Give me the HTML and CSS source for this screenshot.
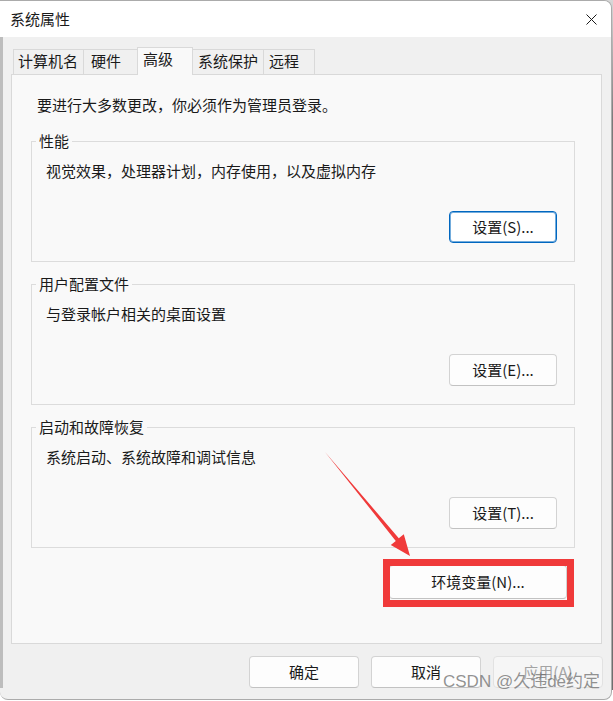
FILE: index.html
```html
<!DOCTYPE html>
<html lang="zh-CN">
<head>
<meta charset="utf-8">
<title>系统属性</title>
<link rel="stylesheet" href="styles.css">
</head>
<body>
<div class="window">
  <div class="titlebar">
    <span class="title">系统属性</span>
    <svg class="close" viewBox="0 0 11 11" width="11" height="11"><path d="M0.5 0.5 L10.5 10.5 M10.5 0.5 L0.5 10.5" stroke="#1a1a1a" stroke-width="1" fill="none"/></svg>
  </div>
  <div class="main">
    <div class="tabs">
      <div class="tab t1">计算机名</div>
      <div class="tab t2">硬件</div>
      <div class="tab t3 active">高级</div>
      <div class="tab t4">系统保护</div>
      <div class="tab t5">远程</div>
    </div>
    <div class="panel">
      <p class="note">要进行大多数更改，你必须作为管理员登录。</p>
      <fieldset class="group">
        <legend>性能</legend>
        <p class="desc">视觉效果，处理器计划，内存使用，以及虚拟内存</p>
        <div class="actions"><button class="btn focus">设置(S)...</button></div>
      </fieldset>
      <fieldset class="group">
        <legend>用户配置文件</legend>
        <p class="desc">与登录帐户相关的桌面设置</p>
        <div class="actions"><button class="btn">设置(E)...</button></div>
      </fieldset>
      <fieldset class="group">
        <legend>启动和故障恢复</legend>
        <p class="desc">系统启动、系统故障和调试信息</p>
        <div class="actions"><button class="btn">设置(T)...</button></div>
      </fieldset>
      <div class="env-row"><button class="btn env">环境变量(N)...</button></div>
    </div>
  </div>
  <div class="footer">
    <button class="btn wide">确定</button>
    <button class="btn wide">取消</button>
    <button class="btn wide disabled">应用(A)</button>
  </div>
</div>
<svg class="arrow" viewBox="0 0 613 701" width="613" height="701">
  <polygon points="325,452 398.8,538.3 403.8,534.2 410,556 390.8,545 395.8,540.9" fill="#f03a3a"/>
</svg>
<div class="redbox"></div>
<div class="watermark">CSDN @久违de约定</div>
</body>
</html>
```
FILE: styles.css
```css
html, body {
  margin: 0;
  padding: 0;
}
body {
  width: 613px;
  height: 701px;
  position: relative;
  overflow: hidden;
  background: linear-gradient(to bottom, #d8d8d8 0, #7a7a7a 120px, #6e6e6e 690px, #ffffff 690px);
  font-family: "Noto Sans CJK SC", "Microsoft YaHei", sans-serif;
  font-size: 15px;
  color: #1a1a1a;
}
.window {
  width: 612px;
  height: 700px;
  box-sizing: border-box;
  border: 1px solid #ababab;
  border-left: none;
  border-radius: 0 8px 8px 8px;
  background: #f0f0f0;
  overflow: hidden;
  display: flex;
  flex-direction: column;
}
.titlebar {
  flex: none;
  height: 36px;
  background: #ffffff;
  display: flex;
  align-items: center;
  justify-content: space-between;
  padding: 0 14px 0 10px;
  line-height: 20px;
}
.close {
  display: block;
}
.main {
  flex: none;
  padding: 0 9px 0 11px;
  background: linear-gradient(to right, #bdbdbd 0, #bdbdbd 3px, #f0f0f0 3px);
}
.tabs {
  display: flex;
  align-items: flex-end;
  height: 37px;
  padding-left: 2px;
}
.tab {
  height: 25px;
  box-sizing: border-box;
  border: 1px solid #d9d9d9;
  border-bottom: none;
  border-right: none;
  line-height: 22px;
  white-space: nowrap;
  background: #f0f0f0;
}
.t1 { width: 70px; padding-left: 4px; }
.t2 { width: 54px; padding-left: 7px; }
.t3 { width: 56px; padding-left: 5px; }
.t4 { width: 70px; padding-left: 5px; border-left: none; }
.t5 { width: 52px; padding-left: 5px; border-right: 1px solid #d9d9d9; }
.tab.active {
  height: 28px;
  margin-bottom: -1px;
  position: relative;
  z-index: 1;
  background: #f9f9f9;
  border-right: 1px solid #d9d9d9;
}
.panel {
  height: 570px;
  box-sizing: border-box;
  border: 1px solid #d9d9d9;
  background: #f9f9f9;
  padding: 20px 26px 0 19px;
}
.note {
  margin: 0 0 16px 6px;
  line-height: 20px;
}
.group {
  margin: 0;
  border: 1px solid #dcdcdc;
  padding: 10px 17px 18px 14px;
  min-width: 0;
}
.group + .group {
  margin-top: 12px;
}
.group legend {
  padding: 0 3px;
  margin-left: -10px;
  line-height: 20px;
}
.desc {
  margin: 0;
  line-height: 20px;
}
.actions {
  display: flex;
  justify-content: flex-end;
  margin-top: 30px;
}
.btn {
  box-sizing: border-box;
  width: 108px;
  height: 32px;
  padding: 0;
  font-family: inherit;
  font-size: 15px;
  line-height: 20px;
  color: #1a1a1a;
  background: #fdfdfd;
  border: 1px solid #d3d3d3;
  border-bottom-color: #c2c2c2;
  border-radius: 4px;
}
.btn.focus {
  background: #ffffff;
  border-color: #0067c0;
  box-shadow: inset 0 0 0 1px rgba(0, 103, 192, 0.55);
}
.env-row {
  display: flex;
  justify-content: flex-end;
  margin: 17px 8px 0 0;
}
.btn.env {
  width: 178px;
  height: 34px;
}
.footer {
  flex: none;
  display: flex;
  justify-content: flex-end;
  gap: 12px;
  padding: 12px 8px 0 0;
  background: linear-gradient(to right, #bdbdbd 0, #bdbdbd 3px, #f0f0f0 3px);
}
.btn.wide {
  width: 110px;
}
.btn.disabled {
  color: #a3a3a3;
  background: #f6f6f6;
  border-color: #e2e2e2;
}
.arrow {
  position: absolute;
  left: 0;
  top: 0;
  pointer-events: none;
}
.redbox {
  position: absolute;
  left: 383px;
  top: 559px;
  width: 191px;
  height: 48px;
  box-sizing: border-box;
  border: 7px solid #f03a3a;
  pointer-events: none;
}
.watermark {
  position: absolute;
  left: 443px;
  top: 672px;
  font-family: "Liberation Sans", "Noto Sans CJK SC", sans-serif;
  font-size: 17px;
  line-height: 20px;
  color: rgba(105, 105, 105, 0.72);
  white-space: nowrap;
}
```
